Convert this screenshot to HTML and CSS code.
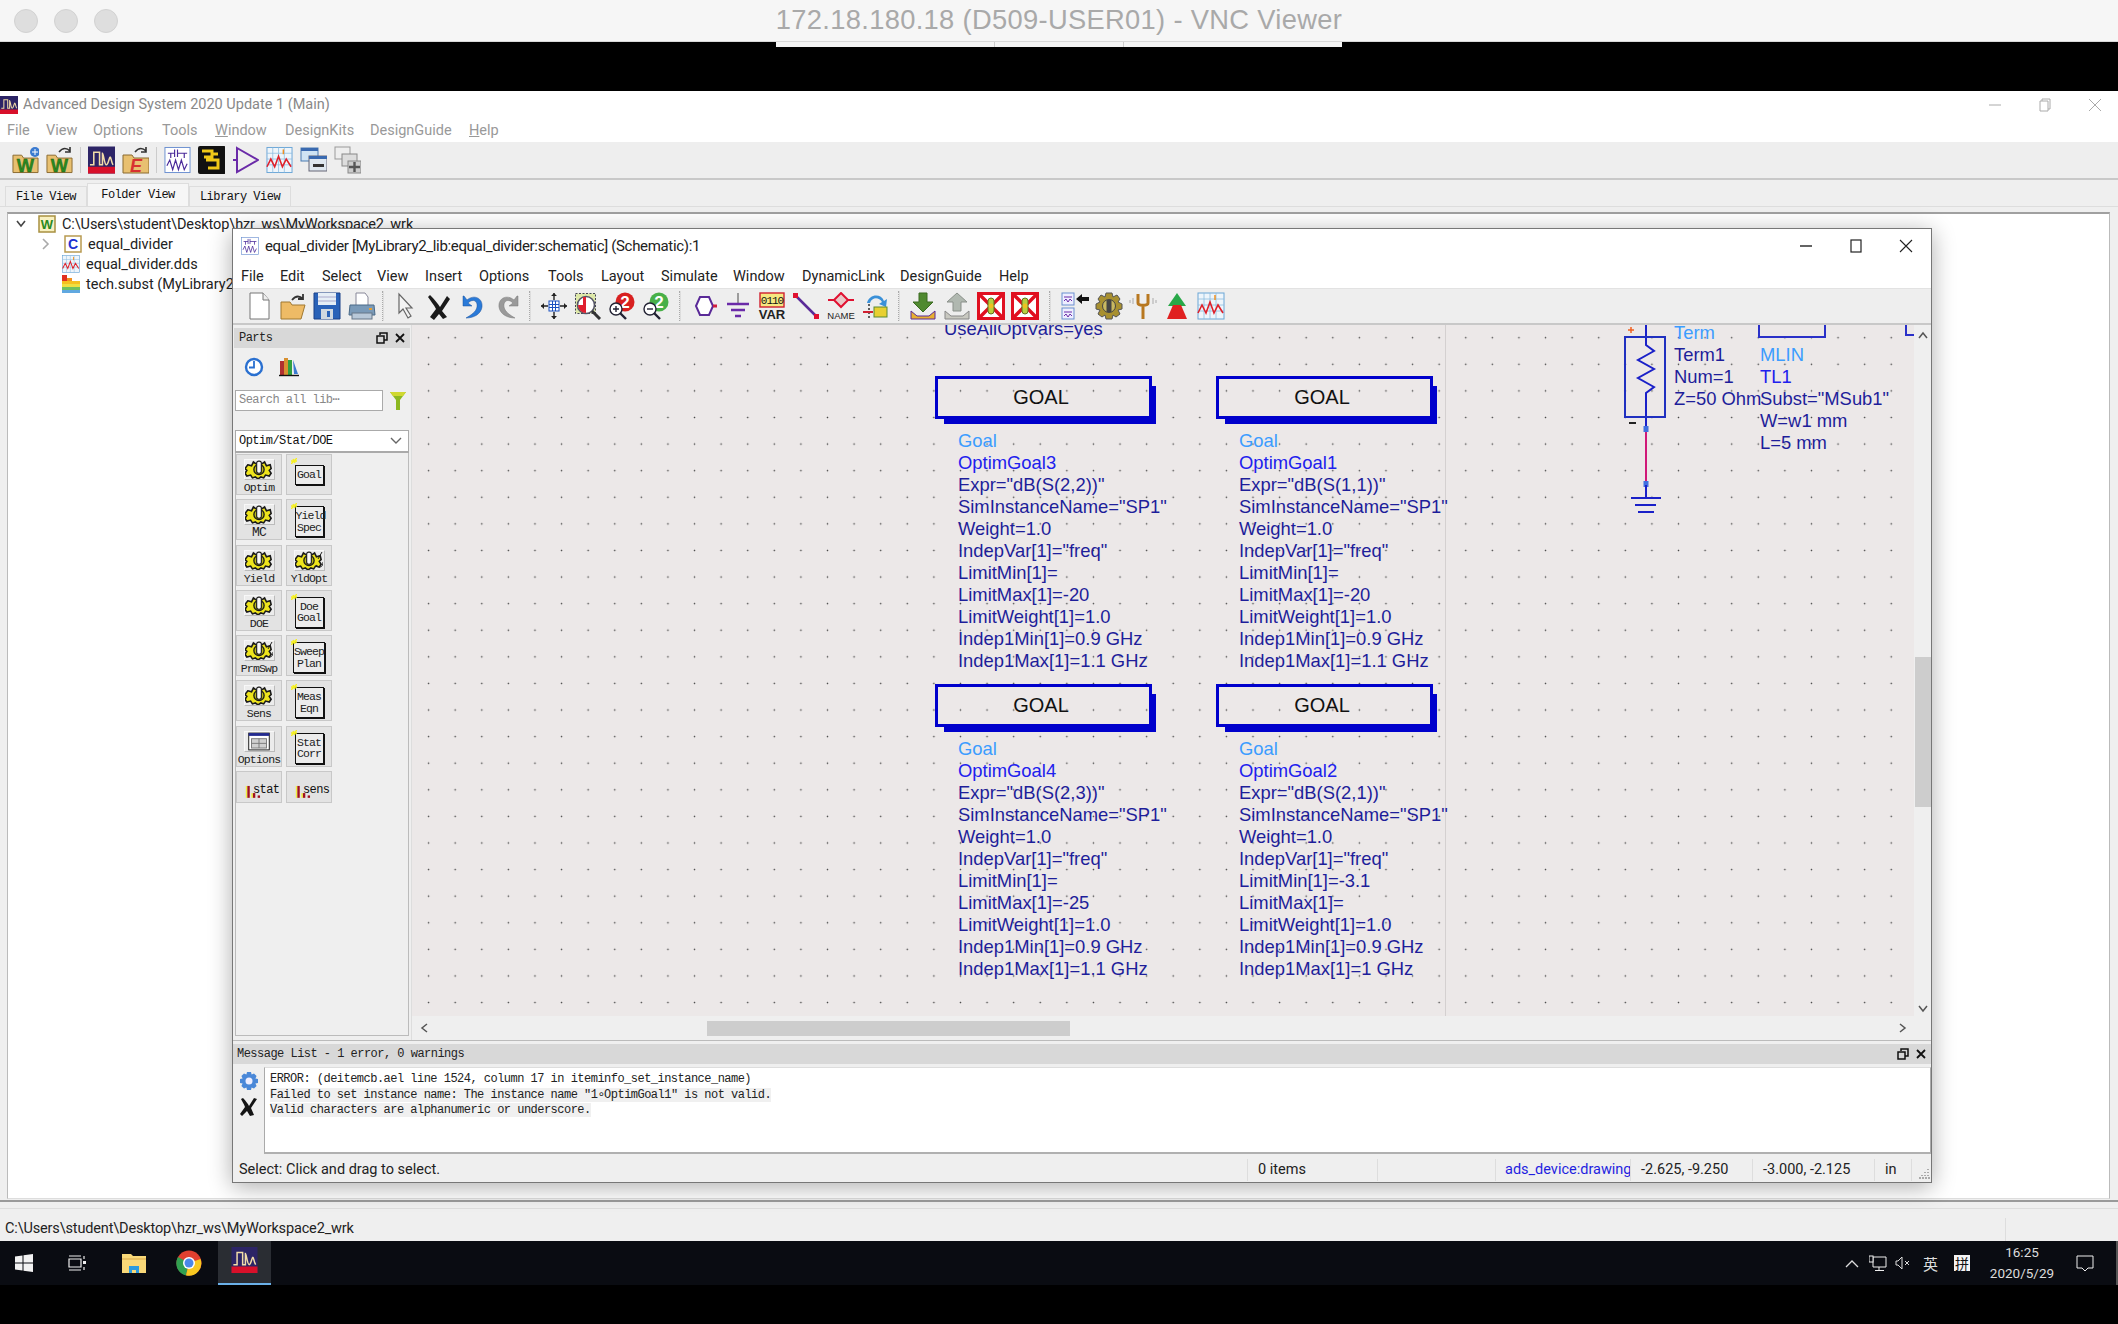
FILE: index.html
```html
<!DOCTYPE html>
<html lang="en">
<head>
<meta charset="utf-8">
<title>VNC Viewer</title>
<link rel="stylesheet" href="styles.css">
</head>
<body>
<svg class="defs" width="0" height="0">
  <defs>
    <symbol id="ads" viewBox="0 0 28 28">
      <rect width="28" height="28" fill="#2c2466"/><rect y="21" width="28" height="7" fill="#d8102a"/>
      <path d="M2 19h4V6h6v13h3V7c1 0 2 12 4 12s3-8 4-8 1 5 3 8" fill="none" stroke="#f2dca8" stroke-width="1.6"/>
    </symbol>
    <symbol id="sch" viewBox="0 0 28 28">
      <rect x="1" y="1" width="26" height="26" fill="#fff" stroke="#6a8fd0"/>
      <path d="M4 7h7M11 3v8M14 3v8M14 7h10M7 7v5M21 7v5M3 20l3-6 3 10 3-10 3 10 3-10 3 10 3-6" fill="none" stroke="#4a2a9a" stroke-width="1.2"/>
    </symbol>
    <symbol id="graph" viewBox="0 0 28 28">
      <rect x="1" y="1" width="26" height="26" fill="#eef5fb" stroke="#6aa6d6"/>
      <path d="M1 7h26M1 13h26M1 19h26M7 1v26M13 1v26M19 1v26" stroke="#8dbde0" stroke-width=".8"/>
      <path d="M1 21l4-8 4 8 4-11 4 11 4-8 5 8" fill="none" stroke="#e0202a" stroke-width="1.6"/>
      <path d="M18 3v5" stroke="#f09020" stroke-width="1.5"/>
    </symbol>
    <symbol id="wsh" viewBox="0 0 28 28">
      <path d="M1 9h9l2 3h15v15H1z" fill="#e8c070" stroke="#8a6a30"/>
      <text x="14" y="26" text-anchor="middle" class="svg-w">W</text>
    </symbol>
    <symbol id="gear" viewBox="0 0 30 20">
      <path d="M3 5l4 1 2-4 3 2 3-2 3 2 3-2 2 4 4-1 1 4-2 2 2 3-2 3-4-1-2 3-3-1-3 2-3-2-3 1-2-3-4 1-2-3 2-3-2-2z" fill="#eee41c" stroke="#1a1a1a" stroke-width="1.7"/>
      <circle cx="15" cy="10" r="5.500" fill="#b8b818" stroke="#1a1a1a" stroke-width="1.400"/>
      <rect x="12.500" y="1" width="5" height="13" rx="2.200" fill="#f8f8f8" stroke="#1a1a1a" stroke-width="1.200"/>
    </symbol>
    <symbol id="rx" viewBox="0 0 28 28">
      <rect x="1.500" y="1.500" width="25" height="25" fill="#fff" stroke="#e01020" stroke-width="3"/>
      <path d="M2 2l24 24M26 2L2 26" stroke="#e01020" stroke-width="3.400"/>
      <rect x="11" y="6" width="6" height="16" rx="3" fill="#b8d040" stroke="#607020"/>
      <circle cx="14" cy="14" r="2.400" fill="#f0c020"/>
    </symbol>
    <symbol id="bars" viewBox="0 0 24 18">
      <rect x="1" y="2" width="2" height="15" fill="#f0f040"/><rect x="3" y="2" width="3" height="15" fill="#a01020"/>
      <rect x="8" y="11" width="2" height="6" fill="#f0f040"/><rect x="10" y="11" width="3" height="6" fill="#a01020"/>
      <rect x="16" y="14" width="3" height="3" fill="#a01020"/>
    </symbol>
    <symbol id="star" viewBox="0 0 6 6"><path d="M0 6l3-3 3-3M0 3l6 0M2 1l2 4" stroke="#f6f020" stroke-width="1.400"/></symbol>
    <symbol id="restore" viewBox="0 0 12 12"><path d="M4 3V1h7v7H8M1 4h7v7H1z" fill="none" stroke="#111" stroke-width="1.500"/></symbol>
    <symbol id="close" viewBox="0 0 12 12"><path d="M2 2l8 8M10 2l-8 8" stroke="#111" stroke-width="1.800"/></symbol>
  </defs>
</svg>

<header class="mac-title">
  <div class="lights"><span class="light"></span><span class="light"></span><span class="light"></span></div>
  <div class="mac-text">172.18.180.18 (D509-USER01) - VNC Viewer</div>
</header>
<div class="black-band"><div class="vnc-strip"><i></i><i></i></div></div>

<main class="app">
  <div class="app-title">
    <svg class="app-logo"><use href="#ads"/></svg>
    <span class="app-name">Advanced Design System 2020 Update 1 (Main)</span>
    <div class="win-ctl dim">
      <svg width="14" height="14" viewBox="0 0 14 14"><path d="M1 7h12" stroke="#aaa"/></svg>
      <svg width="14" height="14" viewBox="0 0 14 14"><path d="M4 3V1h8v10h-2M2 3h8v10H2z" fill="none" stroke="#aaa"/></svg>
      <svg width="14" height="14" viewBox="0 0 14 14"><path d="M1 1l12 12M13 1L1 13" stroke="#aaa"/></svg>
    </div>
  </div>
  <nav class="app-menu">
    <span class="am m-file">File</span><span class="am m-view">View</span><span class="am m-opt">Options</span><span class="am m-tools">Tools</span><span class="am m-win"><u>W</u>indow</span><span class="am m-kits">DesignKits</span><span class="am m-guide">DesignGuide</span><span class="am"><u>H</u>elp</span>
  </nav>
  <div class="app-tools">
    <svg class="ai"><use href="#wsh"/><circle cx="23" cy="6" r="5" fill="#3a7ad0"/><path d="M20 6h6M23 3v6" stroke="#fff"/></svg>
    <svg class="ai"><use href="#wsh"/><path d="M13 6c4-5 8-4 11-1M24 1v5h-5" fill="none" stroke="#333" stroke-width="1.600"/></svg>
    <i class="asep"></i>
    <svg class="ai"><use href="#ads"/></svg>
    <svg class="ai"><path d="M1 9h9l2 3h15v15H1z" fill="#e8c070" stroke="#8a6a30"/><text x="14" y="26" text-anchor="middle" class="svg-e">E</text><path d="M13 6c4-5 8-4 11-1M24 1v5h-5" fill="none" stroke="#333" stroke-width="1.600"/></svg>
    <i class="asep"></i>
    <svg class="ai"><use href="#sch"/></svg>
    <svg class="ai"><rect width="28" height="28" rx="2" fill="#111"/><path d="M4 5h10v6H6M14 8h6M8 14h12v8H10" fill="none" stroke="#f0c818" stroke-width="3"/></svg>
    <svg class="ai"><path d="M5 2l21 12L5 26zM1 14h4" fill="none" stroke="#6a2aa8" stroke-width="2"/></svg>
    <svg class="ai"><use href="#graph"/></svg>
    <svg class="ai"><rect x="1" y="2" width="17" height="13" fill="#cfe4f4" stroke="#4a7ab0"/><rect x="1" y="2" width="17" height="3" fill="#3a6ab0"/><rect x="9" y="10" width="18" height="15" fill="#dfe8f0" stroke="#667"/><rect x="9" y="10" width="18" height="3" fill="#3a6ab0"/><rect x="13" y="18" width="11" height="3" fill="#333"/></svg>
    <svg class="ai"><rect x="1" y="1" width="15" height="12" fill="#eee" stroke="#999"/><rect x="8" y="8" width="15" height="12" fill="#ddd" stroke="#888"/><rect x="14" y="15" width="13" height="12" fill="#ccc" stroke="#888"/><path d="M20.500 16v10M15 21h11" stroke="#555" stroke-width="2.400"/></svg>
  </div>

  <div class="tabs">
    <span class="tab">File View</span><span class="tab active">Folder View</span><span class="tab">Library View</span>
  </div>

  <section class="tree-frame">
    <div class="tree">
      <div class="tree-row r0">
        <svg class="chev" width="12" height="10" viewBox="0 0 12 10"><path d="M2 2l4 5 4-5" fill="none" stroke="#444" stroke-width="1.600"/></svg>
        <svg class="ti"><rect x="1" y="1" width="16" height="16" fill="#f8f0c0" stroke="#a89040" stroke-width="1.500"/><text x="9" y="14" text-anchor="middle" class="svg-tw">W</text></svg>
        <span class="top-path">C:\Users\student\Desktop\hzr_ws\MyWorkspace2_wrk</span>
      </div>
      <div class="tree-row r1">
        <svg class="chev" width="10" height="12" viewBox="0 0 10 12"><path d="M2 1l5 5-5 5" fill="none" stroke="#aaa" stroke-width="1.600"/></svg>
        <svg class="ti"><rect x="1" y="1" width="16" height="16" fill="#fff" stroke="#b89a50" stroke-width="1.500"/><text x="9" y="14" text-anchor="middle" class="svg-tc">C</text></svg>
        <span>equal_divider</span>
      </div>
      <div class="tree-row r2">
        <svg class="ti" viewBox="0 0 28 28"><use href="#graph"/></svg>
        <span>equal_divider.dds</span>
      </div>
      <div class="tree-row r2">
        <svg class="ti" viewBox="0 0 18 18"><rect y="0" width="5" height="6" fill="#e03020"/><rect y="6" width="18" height="3" fill="#f6c020"/><rect y="9" width="18" height="3" fill="#f0e040"/><rect y="12" width="18" height="3" fill="#70c060"/><rect y="15" width="18" height="3" fill="#60a8e0"/><rect x="5" y="3" width="5" height="3" fill="#f09020"/></svg>
        <span>tech.subst (MyLibrary2_lib)</span>
      </div>
    </div>
  </section>

  <footer class="app-status">
    <span class="path">C:\Users\student\Desktop\hzr_ws\MyWorkspace2_wrk</span>
    <i class="app-status-sep"></i>
  </footer>

  <article class="sch-win">
    <div class="sch-title">
      <svg class="sch-logo"><use href="#sch"/></svg>
      <span class="sch-name">equal_divider [MyLibrary2_lib:equal_divider:schematic] (Schematic):1</span>
      <div class="win-ctl">
        <svg width="14" height="14" viewBox="0 0 14 14"><path d="M1 7h12" stroke="#222" stroke-width="1.400"/></svg>
        <svg width="14" height="14" viewBox="0 0 14 14"><rect x="2" y="1" width="10" height="12" fill="none" stroke="#222" stroke-width="1.200"/></svg>
        <svg width="14" height="14" viewBox="0 0 14 14"><path d="M1 1l12 12M13 1L1 13" stroke="#222" stroke-width="1.100"/></svg>
      </div>
    </div>
    <nav class="sch-menu">
      <span class="sm w-file">File</span><span class="sm w-edit">Edit</span><span class="sm w-select">Select</span><span class="sm w-view">View</span><span class="sm w-insert">Insert</span><span class="sm w-options">Options</span><span class="sm w-tools">Tools</span><span class="sm w-layout">Layout</span><span class="sm w-sim">Simulate</span><span class="sm w-window">Window</span><span class="sm w-dyn">DynamicLink</span><span class="sm w-guide">DesignGuide</span><span class="sm">Help</span>
    </nav>
    <div class="sch-tools">
      <svg class="si"><path d="M5 1h13l6 7v19H5z" fill="#fff" stroke="#777"/><path d="M18 1v7h6" fill="#eee" stroke="#777"/></svg>
      <svg class="si"><path d="M2 10h9l2 3h13L22 27H2z" fill="#eebb66" stroke="#a07830"/><path d="M13 8c4-5 8-4 11-1M24 2v5h-5" fill="none" stroke="#333" stroke-width="1.800"/></svg>
      <svg class="si"><path d="M1 1h26v26H1z" fill="#2a62b8" stroke="#1a4088"/><rect x="5" y="1" width="18" height="12" fill="#e6eef6"/><path d="M5 5h18M5 9h18" stroke="#aac"/><rect x="8" y="17" width="12" height="10" fill="#d0d8e0"/><rect x="14" y="19" width="3" height="6" fill="#2a62b8"/></svg>
      <svg class="si"><path d="M8 1h9l3 4v9H8z" fill="#fff" stroke="#889"/><path d="M2 13h24l1 10H1z" fill="#7a9ab8" stroke="#4a6a88"/><rect x="4" y="21" width="20" height="6" fill="#b8c8d8" stroke="#678"/><rect x="21" y="16" width="3" height="2" fill="#e8a030"/></svg>
      <i class="tsep"></i>
      <svg class="si"><path d="M8 2v19l4-4 5 9 3-2-5-8h6z" fill="#f4f4f4" stroke="#666" stroke-width="1.200"/></svg>
      <svg class="si"><path d="M5 3c5 5 8 9 10 12l7-11 3 3-8 12 5 6-4 2-4-5-5 6-4-3 6-8C9 13 5 8 3 5z" fill="#1a1a1a"/></svg>
      <svg class="si"><path d="M4 4v10h9L9 11c5-5 10-2 9 4-1 5-6 8-11 11 8 0 15-4 16-11 1-9-8-13-15-7l-3-4z" fill="#2a7ad8" stroke="#1a509a" stroke-width=".5"/></svg>
      <svg class="si"><path d="M24 4v10h-9l4-3c-5-5-10-2-9 4 1 5 6 8 11 11-8 0-15-4-16-11C4 6 13 2 20 8l3-4z" fill="#9a9a9a" stroke="#777" stroke-width=".5"/></svg>
      <i class="tsep wide"></i>
      <svg class="si"><rect x="9" y="9" width="10" height="10" fill="#fff" stroke="#1a50c0"/><path d="M12.500 9v10M15.500 9v10M9 12.500h10M9 15.500h10" stroke="#1a50c0"/><path d="M14 1v7M14 20v7M1 14h7M20 14h7" stroke="#222" stroke-width="1.400"/><path d="M11 4l3-3 3 3zM11 24l3 3 3-3zM4 11l-3 3 3 3zM24 11l3 3-3 3z" fill="#222"/></svg>
      <svg class="si"><rect x="1.500" y="1.500" width="20" height="20" fill="#dde8a8" stroke="#445" stroke-dasharray="2 1.500"/><circle cx="12" cy="13" r="8.500" fill="#fff" stroke="#556" stroke-width="1.600"/><path d="M4 13a8 8 0 0 0 8 8v-8V5H9v8z" fill="#e02030"/><path d="M18 19l8 8" stroke="#333" stroke-width="3"/></svg>
      <svg class="si"><circle cx="17" cy="10" r="9.500" fill="#d82020"/><text x="17" y="16" text-anchor="middle" class="svg-2">2</text><circle cx="8" cy="17" r="6" fill="#fff" stroke="#223" stroke-width="1.400"/><path d="M5 17h6M8 14v6" stroke="#223" stroke-width="1.400"/><path d="M12 21l6 6" stroke="#223" stroke-width="2.400"/></svg>
      <svg class="si"><circle cx="17" cy="10" r="9.500" fill="#48b048"/><text x="17" y="16" text-anchor="middle" class="svg-2">2</text><circle cx="8" cy="17" r="6" fill="#fff" stroke="#223" stroke-width="1.400"/><path d="M5 17h6" stroke="#223" stroke-width="1.400"/><path d="M12 21l6 6" stroke="#223" stroke-width="2.400"/></svg>
      <i class="tsep wide2"></i>
      <svg class="si"><path d="M6 14l4-9h9l4 9-4 9h-9z" fill="#fff" stroke="#5a2a98" stroke-width="2"/><path d="M23 14h4" stroke="#d02040" stroke-width="3"/></svg>
      <svg class="si"><path d="M14 1v10" stroke="#808080" stroke-width="1.500"/><path d="M3 12h22" stroke="#6a2aa8" stroke-width="2.500"/><path d="M7 18h14M11 24h6" stroke="#6a2aa8" stroke-width="2.500"/></svg>
      <svg class="si"><rect x="2" y="1" width="24" height="14" fill="#f6e880" stroke="#d02030" stroke-width="1.400"/><text x="14" y="12" text-anchor="middle" class="svg-0110">0110</text><text x="14" y="27" text-anchor="middle" class="svg-var">VAR</text></svg>
      <svg class="si"><path d="M3 3l22 22" stroke="#5a2a98" stroke-width="2.500"/><rect x="1" y="1" width="5" height="5" fill="#e01030"/><rect x="22" y="22" width="5" height="5" fill="#e01030"/></svg>
      <svg class="si"><path d="M14 1l7 7-7 7-7-7z" fill="#e8c8c8" stroke="#e01030" stroke-width="2"/><path d="M1 8h6M21 8h6" stroke="#e01030" stroke-width="2"/><text x="14" y="27" text-anchor="middle" class="svg-name">NAME</text></svg>
      <svg class="si"><path d="M6 11C8 2 20 1 23 9l3-2-1 8-7-3 3-2C18 5 11 5 9 11z" fill="#3a90d8"/><path d="M8 12v15" stroke="#222" stroke-dasharray="2 2" stroke-width="1.400"/><path d="M2 20h10" stroke="#d02030" stroke-width="2"/><rect x="13" y="15" width="13" height="10" fill="#e8d030" stroke="#5a8a30"/></svg>
      <i class="tsep wide4"></i>
      <svg class="si"><path d="M10 1h8v9h6l-10 10L4 10h6z" fill="#508a30" stroke="#3a6a20"/><path d="M2 19v8h24v-8l-6 5H8z" fill="#e8b030" stroke="#5a2a98"/></svg>
      <svg class="si"><path d="M10 19h8v-9h6L14 1 4 10h6z" fill="#b0b8b0" stroke="#8a908a"/><path d="M2 19v8h24v-8l-6 5H8z" fill="#c8c8c0" stroke="#888"/></svg>
      <svg class="si"><use href="#rx"/></svg>
      <svg class="si"><use href="#rx"/></svg>
      <i class="tsep wide3"></i>
      <svg class="si"><rect x="1" y="1" width="12" height="12" fill="#eef" stroke="#6a8fd0"/><path d="M3 5h8M3 9l2-2 2 3 2-3 2 2" fill="none" stroke="#6a2aa8"/><rect x="1" y="16" width="12" height="11" fill="#eef" stroke="#6a8fd0"/><path d="M3 20h8M3 24l2-2 2 3 2-3 2 2" fill="none" stroke="#6a2aa8"/><path d="M15 7l6-5v3h7v4h-7v3z" fill="#111"/></svg>
      <svg class="si" viewBox="0 0 28 28"><path d="M11 1h6l1 4 4-2 3 4-2 3 4 2v5l-4 1 2 4-4 3-3-2-1 4h-6l-1-4-3 2-4-3 2-4-4-1v-5l4-2-2-3 3-4 4 2z" fill="#a89030" stroke="#555"/><circle cx="14" cy="14" r="6.500" fill="#c8b860" stroke="#444"/><rect x="11.500" y="8" width="5" height="12" fill="#444"/></svg>
      <svg class="si"><path d="M14 27V14M9 2v9c0 3 10 3 10 0V2" fill="none" stroke="#b87820" stroke-width="3"/><path d="M4 6v6M24 6v6M1 8v3M27 8v3" stroke="#aaa"/></svg>
      <svg class="si"><path d="M14 1l9 13H5z" fill="#28a848"/><path d="M10 13h8l6 14H4z" fill="#e02020"/></svg>
      <svg class="si"><use href="#graph"/></svg>
    </div>

    <div class="sch-mid">
      <aside class="parts">
        <div class="dock-head">
          <span class="mono">Parts</span>
          <div class="dock-btns"><svg width="12" height="12"><use href="#restore"/></svg><svg width="12" height="12"><use href="#close"/></svg></div>
        </div>
        <div class="parts-tools">
          <svg width="20" height="20" viewBox="0 0 20 20"><circle cx="10" cy="10" r="8" fill="#fff" stroke="#2a70d0" stroke-width="2.400"/><path d="M10 4v6.500H5" fill="none" stroke="#2a70d0" stroke-width="1.800"/></svg>
          <svg width="20" height="20" viewBox="0 0 20 20"><rect x="1" y="4" width="4" height="14" fill="#b03030"/><rect x="5" y="1" width="4" height="17" fill="#d89030"/><rect x="9" y="3" width="4" height="15" fill="#30a040"/><path d="M14 3l5 14h-4z" fill="#3a7ad0"/><path d="M0 18.500h20" stroke="#111" stroke-width="1.400"/></svg>
        </div>
        <div class="search-row">
          <div class="search mono">Search all lib⋯</div>
          <svg width="18" height="20" viewBox="0 0 18 20"><path d="M1 1h16l-6 8v10H7V9z" fill="#8cb820"/><path d="M1 1h16l-3 4H4z" fill="#d0d830"/></svg>
        </div>
        <div class="combo mono"><span>Optim/Stat/DOE</span><svg width="14" height="8" viewBox="0 0 14 8"><path d="M2 1l5 5 5-5" fill="none" stroke="#666" stroke-width="1.400"/></svg></div>
        <div class="palette">
          <div class="pi"><div class="pb"><svg class="pg"><use href="#gear"/></svg></div><span class="pl">Optim</span></div>
          <div class="pi"><svg class="pstar"><use href="#star"/></svg><div class="pbox">Goal</div></div>
          <div class="pi"><div class="pb"><svg class="pg"><use href="#gear"/></svg></div><span class="pl big">MC</span></div>
          <div class="pi"><svg class="pstar"><use href="#star"/></svg><div class="pbox tall">Yield<br>Spec</div></div>
          <div class="pi"><div class="pb"><svg class="pg"><use href="#gear"/></svg></div><span class="pl">Yield</span></div>
          <div class="pi"><div class="pb"><svg class="pg"><use href="#gear"/><path d="M21 14c3 3 7 3 7-3M27 1l-4 7" fill="none" stroke="#222"/></svg></div><span class="pl">YldOpt</span></div>
          <div class="pi"><div class="pb"><svg class="pg"><use href="#gear"/></svg></div><span class="pl">DOE</span></div>
          <div class="pi"><svg class="pstar"><use href="#star"/></svg><div class="pbox tall">Doe<br>Goal</div></div>
          <div class="pi"><div class="pb"><svg class="pg"><use href="#gear"/><path d="M21 14c3 3 7 3 7-3M27 1l-4 7" fill="none" stroke="#222"/></svg></div><span class="pl">PrmSwp</span></div>
          <div class="pi"><svg class="pstar"><use href="#star"/></svg><div class="pbox tall wide">Sweep<br>Plan</div></div>
          <div class="pi"><div class="pb"><svg class="pg"><use href="#gear"/></svg></div><span class="pl">Sens</span></div>
          <div class="pi"><svg class="pstar"><use href="#star"/></svg><div class="pbox tall">Meas<br>Eqn</div></div>
          <div class="pi"><div class="pb"><svg class="pg" viewBox="0 0 30 20"><rect x="4" y="1" width="22" height="18" fill="#fff" stroke="#111"/><rect x="4" y="1" width="22" height="3" fill="#222a90"/><rect x="7" y="7" width="16" height="10" fill="#d0d0d0" stroke="#777"/><path d="M7 12h16M15 7v10" stroke="#777"/></svg></div><span class="pl">Options</span></div>
          <div class="pi"><svg class="pstar"><use href="#star"/></svg><div class="pbox tall">Stat<br>Corr</div></div>
          <div class="pi short"><svg class="pbars"><use href="#bars"/></svg><span class="pb-t">stat</span></div>
          <div class="pi short"><svg class="pbars"><use href="#bars"/></svg><span class="pb-t">sens</span></div>
        </div>
      </aside>

      <div class="canvas-wrap">
        <div class="canvas-row">
          <div class="canvas">
            <div class="cline"></div>
            <div class="use-all">UseAllOptVars=yes</div>

            <div class="node n1">
              <div class="goal-box">GOAL</div>
              <div class="params"><div class="c-type">Goal</div><div class="c-name">OptimGoal3</div><div>Expr="dB(S(2,2))"</div><div>SimInstanceName="SP1"</div><div>Weight=1.0</div><div>IndepVar[1]="freq"</div><div>LimitMin[1]=</div><div>LimitMax[1]=-20</div><div>LimitWeight[1]=1.0</div><div>Indep1Min[1]=0.9 GHz</div><div>Indep1Max[1]=1.1 GHz</div></div>
            </div>
            <div class="node n2">
              <div class="goal-box">GOAL</div>
              <div class="params"><div class="c-type">Goal</div><div class="c-name">OptimGoal1</div><div>Expr="dB(S(1,1))"</div><div>SimInstanceName="SP1"</div><div>Weight=1.0</div><div>IndepVar[1]="freq"</div><div>LimitMin[1]=</div><div>LimitMax[1]=-20</div><div>LimitWeight[1]=1.0</div><div>Indep1Min[1]=0.9 GHz</div><div>Indep1Max[1]=1.1 GHz</div></div>
            </div>
            <div class="node n3">
              <div class="goal-box">GOAL</div>
              <div class="params"><div class="c-type">Goal</div><div class="c-name">OptimGoal4</div><div>Expr="dB(S(2,3))"</div><div>SimInstanceName="SP1"</div><div>Weight=1.0</div><div>IndepVar[1]="freq"</div><div>LimitMin[1]=</div><div>LimitMax[1]=-25</div><div>LimitWeight[1]=1.0</div><div>Indep1Min[1]=0.9 GHz</div><div>Indep1Max[1]=1.1 GHz</div></div>
            </div>
            <div class="node n4">
              <div class="goal-box">GOAL</div>
              <div class="params"><div class="c-type">Goal</div><div class="c-name">OptimGoal2</div><div>Expr="dB(S(2,1))"</div><div>SimInstanceName="SP1"</div><div>Weight=1.0</div><div>IndepVar[1]="freq"</div><div>LimitMin[1]=-3.1</div><div>LimitMax[1]=</div><div>LimitWeight[1]=1.0</div><div>Indep1Min[1]=0.9 GHz</div><div>Indep1Max[1]=1 GHz</div></div>
            </div>

            <svg class="term-art" width="60" height="200" viewBox="0 0 60 200">
              <path d="M27 0v20l8 6-16 9 16 9-16 9 16 9-8 6v38" fill="none" stroke="#1a20c8" stroke-width="2"/>
              <rect x="6" y="12" width="40" height="80" fill="none" stroke="#2030c0" stroke-width="2"/>
              <path d="M27 106v53" stroke="#d01878" stroke-width="2"/>
              <rect x="24.500" y="101" width="5" height="6" fill="#4070e0"/><rect x="24.500" y="156" width="5" height="6" fill="#4070e0"/>
              <path d="M27 160v12M12 173h30M16 180h21M19 187h16" stroke="#1a20c8" stroke-width="2"/>
              <path d="M9 5h6M12 2v6" stroke="#f06020" stroke-width="1.500"/>
              <path d="M10 98h7" stroke="#222" stroke-width="2"/>
            </svg>
            <div class="term-text"><div class="c-type">Term</div><div>Term1</div><div>Num=1</div><div>Z=50 Ohm</div></div>
            <div class="mlin-rect"></div>
            <div class="mlin-text"><div class="c-type">MLIN</div><div class="c-name">TL1</div><div>Subst="MSub1"</div><div>W=w1 mm</div><div>L=5 mm</div></div>
            <div class="mlin-end"></div>
          </div>
          <div class="vscroll">
            <svg width="12" height="8" viewBox="0 0 12 8"><path d="M2 7l4-5 4 5" fill="none" stroke="#555" stroke-width="1.500"/></svg>
            <div class="vthumb"></div>
            <svg class="v-down" width="12" height="8" viewBox="0 0 12 8"><path d="M2 1l4 5 4-5" fill="none" stroke="#555" stroke-width="1.500"/></svg>
          </div>
        </div>
        <div class="hscroll">
          <svg width="8" height="12" viewBox="0 0 8 12"><path d="M7 2L2 6l5 4" fill="none" stroke="#555" stroke-width="1.500"/></svg>
          <div class="hthumb"></div>
          <svg class="h-right" width="8" height="12" viewBox="0 0 8 12"><path d="M1 2l5 4-5 4" fill="none" stroke="#555" stroke-width="1.500"/></svg>
        </div>
      </div>
    </div>

    <section class="msg">
      <div class="dock-head msg-head">
        <span class="mono">Message List - 1 error, 0 warnings</span>
        <div class="dock-btns"><svg width="12" height="12"><use href="#restore"/></svg><svg width="12" height="12"><use href="#close"/></svg></div>
      </div>
      <div class="msg-body">
        <div class="msg-icons">
          <svg width="18" height="18" viewBox="0 0 18 18"><path d="M7 0h4l.6 2.600 2.400-1.200 2.600 2.600-1.200 2.400L18 7v4l-2.600.6 1.200 2.400-2.600 2.600-2.400-1.200L11 18H7l-.6-2.600-2.400 1.200L1.400 14l1.200-2.400L0 11V7l2.600-.6L1.400 4 4 1.400l2.400 1.200z" fill="#4a88d8"/><circle cx="9" cy="9" r="3.500" fill="#eef"/></svg>
          <svg width="18" height="18" viewBox="0 0 18 18"><path d="M3 0c3 3 5 6 6 8l5-8 3 1-6 9 3 7-4 1-3-5-5 5-2-2 5-7C4 6 2 3 1 1z" fill="#151515"/></svg>
        </div>
        <div class="msg-text mono">
          <div>ERROR: (deitemcb.ael line 1524, column 17 in iteminfo_set_instance_name)</div>
          <div><span class="hl">Failed to set instance name: The instance name "1∘OptimGoal1" is not valid.</span></div>
          <div><span class="hl">Valid characters are alphanumeric or underscore.</span></div>
        </div>
      </div>
    </section>

    <footer class="sch-status">
      <span class="st st-main">Select: Click and drag to select.</span>
      <span class="st st-items">0 items</span>
      <span class="st st-empty"></span>
      <span class="st st-dev">ads_device:drawing</span>
      <span class="st st-c">-2.625, -9.250</span>
      <span class="st st-c">-3.000, -2.125</span>
      <span class="st st-u">in</span>
      <span class="st st-grip"><svg width="12" height="12" viewBox="0 0 12 12"><path d="M10 2v1M7 5v1M10 5v1M4 8v1M7 8v1M10 8v1M1 11h11" stroke="#aaa" stroke-width="2" stroke-dasharray="2 1"/></svg></span>
    </footer>
  </article>
</main>

<div class="taskbar">
  <svg class="tb-win" width="18" height="18" viewBox="0 0 18 18"><path d="M0 2.500l7.500-1v7H0zM8.500 1.300L18 0v8.500H8.500zM0 9.500h7.500v7L0 15.500zM8.500 9.500H18V18l-9.500-1.300z" fill="#f2f2f2"/></svg>
  <svg class="tb-task" width="20" height="18" viewBox="0 0 20 18"><path d="M1 5h12v8H1zM1 2h12M1 16h12M16 2v3M16 13v3" fill="none" stroke="#eee" stroke-width="1.200"/><rect x="15" y="7" width="3" height="3" fill="#eee"/></svg>
  <svg class="tb-folder" width="24" height="20" viewBox="0 0 24 20"><path d="M0 1h9l2 2h13v17H0z" fill="#f8d878"/><path d="M0 5h24v2H0z" fill="#e8c060"/><path d="M7 20v-7h10v7h-3v-3h-4v3z" fill="#2a9ae0"/></svg>
  <svg class="tb-chrome" width="26" height="26" viewBox="0 0 26 26"><circle cx="13" cy="13" r="12.500" fill="#e04030"/><path d="M13 13L2 7a12.500 12.500 0 0 0 8 18.500z" fill="#30a050"/><path d="M13 13l11.500-4a12.500 12.500 0 0 1-14.500 16.500z" fill="#f8c820"/><circle cx="13" cy="13" r="6" fill="#fff"/><circle cx="13" cy="13" r="4.500" fill="#4a88e8"/></svg>
  <div class="tb-active"><svg width="27" height="26"><use href="#ads"/></svg></div>
  <div class="tray">
    <svg class="tr-up" width="14" height="9" viewBox="0 0 14 9"><path d="M1 8l6-6 6 6" fill="none" stroke="#ddd" stroke-width="1.300"/></svg>
    <svg class="tr-net" width="18" height="17" viewBox="0 0 18 17"><path d="M4 2h13v10H4zM10 12v3M6 15.500h9" fill="none" stroke="#eee"/><rect x="0" y="1" width="4" height="6" fill="#0a0c12" stroke="#eee"/></svg>
    <svg class="tr-vol" width="16" height="14" viewBox="0 0 16 14"><path d="M1 5h2l4-4v12L3 9H1zM10 5l4 4M14 5l-4 4" fill="none" stroke="#ddd"/></svg>
    <span class="tr-ime">英</span>
    <span class="tr-pin">拼</span>
    <div class="tr-clock"><div>16:25</div><div>2020/5/29</div></div>
    <svg class="tr-note" width="18" height="17" viewBox="0 0 18 17"><path d="M1 1h16v12h-5l-3 3-3-3H1z" fill="none" stroke="#eee"/></svg>
  </div>
</div>
<div class="bottom-black"></div>
</body>
</html>
```
FILE: styles.css
```css
* { box-sizing: border-box; }
html, body { margin: 0; padding: 0; }
body {
  width: 2118px; height: 1324px; overflow: hidden; background: #000;
  font-family: "Roboto", "Liberation Sans", sans-serif; color: #111;
  display: flex; flex-direction: column;
}
.defs { position: absolute; }
svg { display: block; flex: none; }
i { display: block; }
.mono { font-family: "Liberation Mono", monospace; font-size: 12px; letter-spacing: -.52px; color: #222; }
.svg-w { font: 900 19px "Liberation Sans", sans-serif; fill: #2a8a20; stroke: #1a5a10; stroke-width: .4px; }
.svg-e { font: italic 900 18px "Liberation Sans", sans-serif; fill: #d83030; }
.svg-tw { font: 900 13px "Liberation Sans", sans-serif; fill: #2a8a20; }
.svg-tc { font: 900 14px "Liberation Sans", sans-serif; fill: #2030d0; }
.svg-2 { font: 700 17px "Liberation Sans", sans-serif; fill: #fff; }
.svg-0110 { font: 500 11px "Liberation Mono", monospace; letter-spacing: -1px; fill: #111; }
.svg-var { font: 700 13px "Liberation Sans", sans-serif; fill: #222; }
.svg-name { font: 500 9.500px "Liberation Sans", sans-serif; fill: #222; }

/* mac window chrome */
.mac-title { height: 42px; background: #f6f6f6; border-bottom: 1px solid #d8d8d8; display: flex; align-items: center; position: relative; flex: none; }
.lights { display: flex; gap: 16px; padding-left: 14px; }
.light { width: 24px; height: 24px; border-radius: 50%; background: #dedede; border: 1px solid #d2d2d2; }
.mac-text { position: absolute; left: 0; right: 0; top: 4px; text-align: center; font: 27.300px "Liberation Sans", sans-serif; letter-spacing: .33px; color: #a9a9a9; }
.black-band { height: 49px; background: #000; flex: none; }
.vnc-strip { width: 566px; height: 5px; margin: 0 auto; background: #f4f4f4; display: flex; justify-content: center; gap: 128px; }
.vnc-strip i { width: 1px; background: #ccc; }

/* main app */
.app { height: 1150px; flex: none; background: #efefef; position: relative; display: flex; flex-direction: column; }
.app-title { height: 27px; background: #fff; display: flex; align-items: center; position: relative; font-size: 14.500px; color: #888; flex: none; }
.app-logo { width: 18px; height: 18px; margin: 0 5px 0 0; }
.win-ctl { margin-left: auto; display: flex; }
.win-ctl.dim { gap: 36px; padding-right: 16px; }
.app-menu { height: 25px; background: #fff; display: flex; align-items: center; padding-left: 7px; font-size: 14.500px; color: #999; flex: none; border-bottom: 1px solid #eee; }
.am { display: block; }
.m-file { width: 39px; } .m-view { width: 47px; } .m-opt { width: 69px; } .m-tools { width: 53px; } .m-win { width: 70px; } .m-kits { width: 85px; } .m-guide { width: 99px; }
.app-tools { height: 37px; flex: none; display: flex; align-items: center; gap: 7px; padding: 0 0 2px 12px; background: #eee; border-bottom: 2px solid #c8c8c8; }
.ai { width: 27px; height: 28px; }
.asep { width: 1px; height: 26px; background: #ccc; }
.tabs { height: 27px; flex: none; display: flex; align-items: flex-end; padding-left: 5px; border-bottom: 1px solid #ddd; }
.tab { font: 12px "Liberation Mono", monospace; letter-spacing: -.52px; color: #111; width: 102px; height: 20px; display: flex; align-items: center; justify-content: center; background: #efefef; border: 1px solid #ddd; border-bottom: 0; }
.tab:first-child { width: 82px; }
.tab.active { background: #f6f6f6; height: 23px; }
.tree-frame { flex: 1; margin: 5px 8px 1px 7px; background: #fff; border-top: 2px solid #a0a0a0; border-left: 1px solid #bbb; border-right: 1px solid #bbb; border-bottom: 1px solid #ddd; overflow: hidden; }
.tree-row { height: 20px; display: flex; align-items: center; font-size: 14.500px; color: #222; }
.tree-row .ti { width: 18px; height: 18px; margin-right: 6px; }
.top-path { letter-spacing: -.1px; }
.tree-row.r0 { padding-left: 7px; }
.tree-row.r0 .chev { margin-right: 11px; }
.tree-row.r1 { padding-left: 33px; }
.tree-row.r1 .chev { margin-right: 13px; }
.tree-row.r2 { padding-left: 54px; }
.app-status { height: 41px; flex: none; background: #efefef; border-top: 2px solid #9a9a9a; display: flex; align-items: flex-end; padding: 0 0 2px 5px; position: relative; box-shadow: inset 0 6px 0 #efefef, inset 0 7px 0 #ddd; }
.path { font-size: 14.500px; color: #222; line-height: 20px; letter-spacing: -.15px; }
.app-status-sep { position: absolute; left: 2005px; top: 16px; height: 23px; width: 1px; background: #ddd; }

/* schematic window */
.sch-win { position: absolute; left: 232px; top: 137px; width: 1700px; height: 955px; background: #efefef; border: 1px solid #777; box-shadow: 0 4px 22px rgba(0,0,0,.32); display: flex; flex-direction: column; }
.sch-title { height: 35px; background: #fff; flex: none; display: flex; align-items: center; padding: 0 0 2px 8px; font-size: 15px; color: #222; }
.sch-name { letter-spacing: -.33px; }
.sch-logo { width: 18px; height: 18px; margin-right: 6px; }
.sch-title .win-ctl { gap: 36px; padding-right: 18px; }
.sch-menu { height: 24px; background: #fff; flex: none; display: flex; align-items: center; padding-left: 8px; font-size: 14.500px; color: #222; }
.w-file { width: 39px; } .w-edit { width: 42px; } .w-select { width: 55px; } .w-view { width: 48px; } .w-insert { width: 54px; } .w-options { width: 69px; } .w-tools { width: 53px; } .w-layout { width: 60px; } .w-sim { width: 72px; } .w-window { width: 69px; } .w-dyn { width: 98px; } .w-guide { width: 99px; }
.sch-tools { height: 37px; flex: none; display: flex; align-items: center; gap: 6.200px; padding-left: 12px; background: #eee; border-top: 1px solid #e2e2e2; border-bottom: 2px solid #c8c8c8; }
.si { width: 28px; height: 28px; }
.tsep { width: 2px; height: 30px; margin: 0 .5px; border-left: 1px dotted #aaa; border-right: 1px solid #ddd; }
.tsep.wide { margin: 0 3px 0 1px; }
.tsep.wide2 { margin: 0 3px 0 2px; }
.tsep.wide4 { margin: 0 3px 0 2.600px; }
.tsep.wide3 { margin: 0 3.500px; }
.sch-mid { flex: 1; display: flex; min-height: 0; }

/* parts dock */
.parts { width: 179px; flex: none; padding: 3px 1px 0; display: flex; flex-direction: column; background: #efefef; border-right: 1px solid #ddd; }
.dock-head { height: 20px; background: #d8d8d8; display: flex; align-items: center; padding-left: 5px; flex: none; }
.dock-btns { margin-left: auto; display: flex; gap: 6px; padding-right: 4px; }
.parts-tools { display: flex; gap: 15px; height: 42px; padding: 9px 0 0 10px; flex: none; }
.search-row { display: flex; gap: 6px; align-items: center; padding-left: 1px; height: 21px; flex: none; }
.search { width: 148px; height: 21px; background: #fff; border: 1px solid #aaa; line-height: 19px; padding-left: 3px; color: #888; }
.combo { margin: 19px 1px 0; height: 23px; flex: none; background: #fff; border: 1px solid #aaa; border-bottom: 2px solid #aaa; display: flex; align-items: center; justify-content: space-between; padding: 0 5px 0 3px; color: #111; }
.palette { flex: 1; margin: 0 1px 4px; border: 1px solid #bbb; border-top: 0; padding: 1px 0 0 0; display: grid; grid-template-columns: 46px 46px; grid-auto-rows: 41px; column-gap: 4px; row-gap: 4.300px; align-content: start; font: 11px "Liberation Mono", monospace; }
.pi { position: relative; background: #e3e3e3; border: 1px solid #c8c8c8; display: flex; flex-direction: column; align-items: center; padding-top: 4px; }
.pb { width: 31px; height: 21px; background: #ececec; border: 1px solid #f8f8f8; border-bottom-color: #bbb; border-right-color: #bbb; display: flex; align-items: center; justify-content: center; flex: none; }
.pg { width: 28px; height: 19px; }
.pl { font: 11.500px "Liberation Mono", monospace; letter-spacing: -.8px; line-height: 14px; margin-top: 1px; color: #222; }
.pl.big { font-size: 13px; }
.pstar { position: absolute; left: 4px; top: 3px; width: 6px; height: 6px; }
.pbox { margin-top: 6px; width: 29px; background: #ececec; border: 1px solid #111; box-shadow: 1px 1px 0 #111; text-align: center; padding: 3px 0; font: 11.500px/11.500px "Liberation Mono", monospace; letter-spacing: -.9px; color: #222; }
.pbox.tall { margin-top: 2px; width: 29px; }
.pbox.wide { width: 32px; }
.pi.short { height: 32px; flex-direction: row; align-items: flex-end; padding: 0 0 2px 8px; }
.pbars { width: 19px; height: 17px; }
.pb-t { position: absolute; left: 16px; top: 11px; font: 12px "Liberation Mono", monospace; letter-spacing: -.6px; }

/* canvas */
.canvas-wrap { flex: 1; display: flex; flex-direction: column; min-width: 0; }
.canvas-row { flex: 1; display: flex; min-height: 0; }
.canvas { flex: 1; position: relative; overflow: hidden; background-color: #ece8e8; background-image: radial-gradient(circle at center, #444 .6px, transparent 1.100px); background-size: 26.600px 26.600px; background-position: 3.300px -.6px; font: 18.400px/22px "Liberation Sans", sans-serif; color: #1e1e9a; }
.cline { position: absolute; left: 1033px; top: 0; bottom: 0; width: 1px; background: #d4d0d0; }
.c-type { color: #3b9cff; }
.c-name { color: #2020ee; }
.use-all { position: absolute; left: 532px; top: -7px; }
.node { position: absolute; width: 260px; }
.n1 { left: 523px; top: 51px; } .n2 { left: 804px; top: 51px; } .n3 { left: 523px; top: 359px; } .n4 { left: 804px; top: 359px; }
.goal-box { width: 217px; height: 43px; border: 3px solid #0000cc; box-shadow: 6.500px 7.500px 0 -2.500px #0000cc; text-align: center; padding-right: 5px; font-size: 20px; line-height: 36px; color: #111; }
.params { margin: 11px 0 0 23px; white-space: nowrap; }
.term-art { position: absolute; left: 1207px; top: 0; }
.term-text { position: absolute; left: 1262px; top: -3px; white-space: nowrap; }
.mlin-rect { position: absolute; left: 1346px; top: -12px; width: 68px; height: 25px; border: 2px solid #2a30c8; }
.mlin-text { position: absolute; left: 1348px; top: 19px; white-space: nowrap; }
.mlin-end { position: absolute; left: 1493px; top: -10px; width: 9px; height: 21px; border-left: 2px solid #2a30c8; border-bottom: 2px solid #2a30c8; }
.vscroll { width: 17px; flex: none; background: #efefef; display: flex; flex-direction: column; align-items: center; padding-top: 6px; }
.vthumb { width: 16px; height: 150px; background: #cdcdcd; margin-top: 318px; }
.v-down { margin-top: auto; margin-bottom: 3px; }
.hscroll { height: 24px; flex: none; background: #efefef; display: flex; align-items: center; padding: 0 24px 0 8px; }
.hthumb { width: 363px; height: 15px; background: #cdcdcd; margin-left: 279px; }
.h-right { margin-left: auto; }

/* message list */
.msg { height: 114px; flex: none; padding-top: 3px; display: flex; flex-direction: column; border-top: 1px solid #bbb; }
.msg-head { padding-left: 4px; }
.msg-body { flex: 1; display: flex; padding-top: 3px; min-height: 0; }
.msg-icons { width: 31px; flex: none; display: flex; flex-direction: column; align-items: center; gap: 8px; padding-top: 5px; }
.msg-text { flex: 1; background: #fff; border: 1px solid #aaa; border-top-color: #ddd; border-bottom: 2px solid #b0b0b0; padding: 4px 0 0 5px; line-height: 15.500px; white-space: nowrap; overflow: hidden; }
.hl { background: #f0f0f0; }
.sch-status { height: 28px; flex: none; display: flex; align-items: center; padding-top: 3px; font-size: 14.500px; color: #222; }
.st { display: flex; align-items: center; height: 22px; padding-left: 10px; border-right: 1px solid #ddd; white-space: nowrap; flex: none; overflow: hidden; }
.st-main { width: 1015px; padding-left: 6px; }
.st-items { width: 130px; }
.st-empty { width: 118px; }
.st-dev { width: 135px; color: #1f1fe0; padding-left: 9px; }
.st-c { width: 122px; }
.st-u { width: 37px; }
.st-grip { border: 0; padding: 6px 0 0 6px; }

/* taskbar */
.taskbar { height: 44px; flex: none; background: #0a0c12; display: flex; align-items: center; position: relative; }
.tb-win { margin-left: 15px; }
.tb-task { margin-left: 35px; }
.tb-folder { margin-left: 34px; }
.tb-chrome { margin-left: 30px; }
.tb-active { margin-left: 16px; width: 53px; height: 44px; background: #2a2d33; border-bottom: 2px solid #6ab0e8; display: flex; align-items: center; justify-content: center; padding-bottom: 4px; }
.tray { margin-left: auto; display: flex; align-items: center; color: #ddd; height: 44px; padding-right: 22px; border-right: 2px solid #555; }
.tr-up { margin-right: 10px; }
.tr-net { margin-right: 8px; }
.tr-vol { margin-right: 12px; }
.tr-ime { font: 15px "Noto Sans CJK SC", sans-serif; margin-right: 16px; }
.tr-pin { font: 14px/16px "Noto Sans CJK SC", sans-serif; background: #f4f4f4; color: #111; width: 16px; height: 16px; text-align: center; margin-right: 19px; }
.tr-clock { width: 66px; text-align: center; font-size: 13.500px; line-height: 21px; margin-right: 21px; }
.bottom-black { flex: 1; background: #000; }
```
